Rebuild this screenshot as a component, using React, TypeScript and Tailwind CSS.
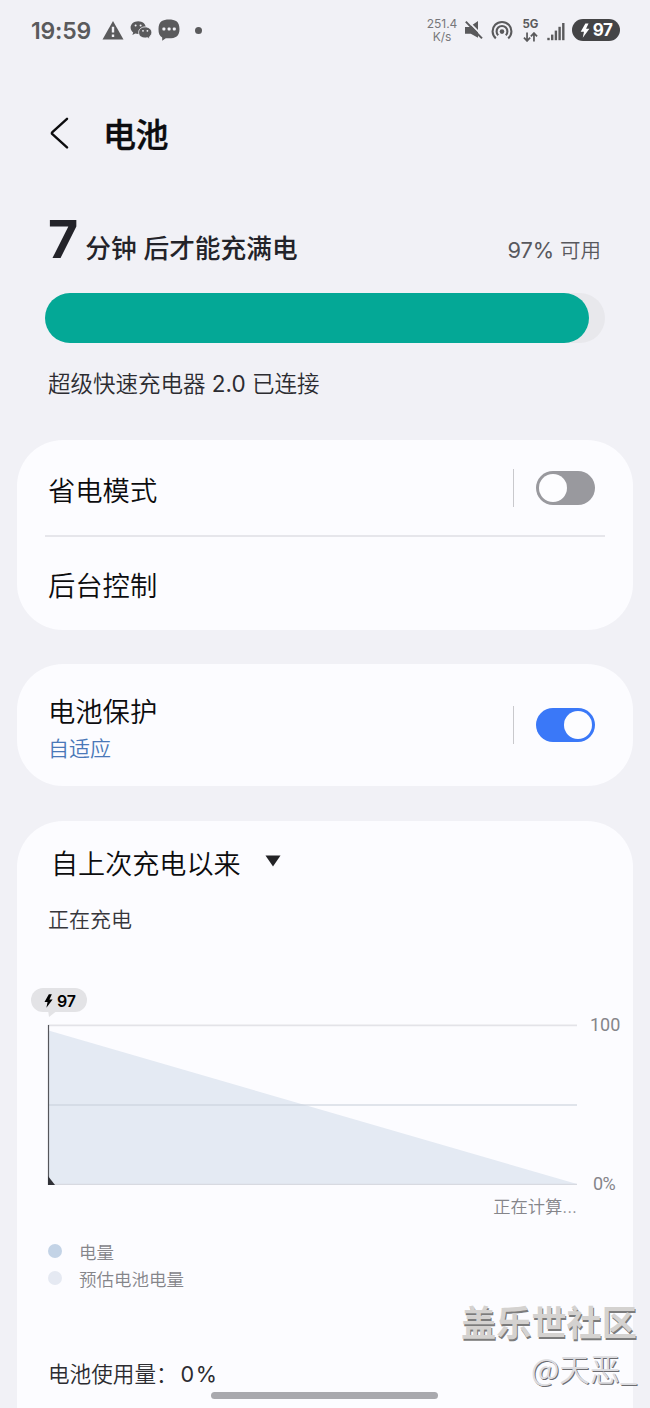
import React, { useState } from "react";

interface SwitchProps {
  checked: boolean;
  onChange: () => void;
}

const BoltIcon: React.FC<{ className?: string }> = ({ className }) => (
  <svg viewBox="0 0 10 16" className={className} fill="currentColor">
    <path d="M5.4 0.4 L0.4 9.2 H3.9 L2.6 15.6 L9.7 6.2 H6.1 L8.8 0.4 Z" />
  </svg>
);

const Switch: React.FC<SwitchProps> = ({ checked, onChange }) => (
  <div className="flex items-center">
    <div className="h-[38px] w-px bg-[#c9c9cd]" />
    <button
      onClick={onChange}
      className={`ml-[22px] flex h-[34px] w-[59px] items-center rounded-full px-[3px] ${
        checked ? "justify-end bg-[#3a78f8]" : "justify-start bg-[#99999e]"
      }`}
    >
      <span className="h-7 w-7 rounded-full bg-[#fdfdff]" />
    </button>
  </div>
);

const StatusBar: React.FC = () => (
  <div className="flex h-[60px] items-center justify-between pr-[30px] pl-[31px] text-[#5a5a5c]">
    <div className="flex items-center">
      <span className="w-[61px] pt-px text-[23px] leading-6 font-semibold tracking-[-0.2px]">19:59</span>
      <svg viewBox="0 0 22 20" className="ml-[10px] h-5 w-[22px]">
        <path d="M11 1 L21.5 19.5 H0.5 Z" fill="currentColor" />
        <path d="M11 6.8 V12.6 M11 14.6 V17" stroke="#f1f1f6" strokeWidth="2.4" />
      </svg>
      <svg viewBox="0 0 22 20" className="ml-[6px] h-5 w-[22px]">
        <path
          d="M8.2 1.2 C3.8 1.2 0.6 4 0.6 7.6 C0.6 9.6 1.6 11.3 3.2 12.5 L2.4 15 L5.3 13.5 C6.2 13.8 7.2 13.9 8.2 13.9 C12.6 13.9 15.8 11.2 15.8 7.6 C15.8 4 12.6 1.2 8.2 1.2 Z"
          fill="currentColor"
        />
        <path
          d="M15.2 6.9 C11.4 6.9 8.6 9.3 8.6 12.5 C8.6 15.7 11.4 18 15.2 18 C16 18 16.8 17.9 17.5 17.7 L20 19 L19.4 16.9 C20.9 15.8 21.8 14.3 21.8 12.5 C21.8 9.3 19 6.9 15.2 6.9 Z"
          fill="currentColor"
          stroke="#f1f1f6"
          strokeWidth="0.9"
        />
        <g fill="#f1f1f6">
          <circle cx="5.6" cy="5.6" r="1" />
          <circle cx="10.6" cy="5.6" r="1" />
          <circle cx="13" cy="10.8" r="0.9" />
          <circle cx="17.4" cy="10.8" r="0.9" />
        </g>
      </svg>
      <svg viewBox="0 0 22 22" className="ml-[6px] h-[22px] w-[22px]">
        <path
          d="M11 0.4 C17 0.4 21.5 2 21.5 10 C21.5 17.5 17.5 19.3 11 19.3 H7.8 L4.2 21.8 V18.4 C1.3 17 0.5 14.2 0.5 10 C0.5 2 5 0.4 11 0.4 Z"
          fill="currentColor"
        />
        <g fill="#f1f1f6">
          <rect x="4.4" y="8.6" width="3" height="3" rx="1" />
          <rect x="9.6" y="8.6" width="3" height="3" rx="1" />
          <rect x="14.8" y="8.6" width="3" height="3" rx="1" />
        </g>
      </svg>
      <span className="ml-[15px] h-[7px] w-[7px] rounded-full bg-current" />
    </div>

    <div className="flex items-center">
      <div className="w-8 text-center text-[12px] leading-[13px] font-normal text-[#77777a]">
        <div>251.4</div>
        <div>K/s</div>
      </div>
      <svg viewBox="0 0 20 20" className="ml-[6px] h-5 w-5">
        <path d="M1 7 H5.4 L14 1 V17.8 L6.8 13.8 H1 Z" fill="currentColor" />
        <path d="M3.4 0.6 L20 17.2" stroke="#f1f1f6" strokeWidth="1.8" />
        <path d="M1.8 1.6 L18 18.4" stroke="currentColor" strokeWidth="2" />
      </svg>
      <svg viewBox="0 0 22 20" className="ml-[7px] h-5 w-[22px]" fill="none" stroke="currentColor" strokeWidth="2.1">
        <path d="M4.8 18.4 A9.4 9.4 0 1 1 17.2 18.4" />
        <path d="M7.2 15.2 A5.4 5.4 0 1 1 14.8 15.2" />
        <circle cx="11" cy="11.6" r="2.3" fill="currentColor" stroke="none" />
      </svg>
      <div className="ml-[9px] flex w-[17px] flex-col items-center">
        <span className="text-[11.5px] leading-[12px] font-bold">5G</span>
        <svg viewBox="0 0 16 11" className="mt-[2px] h-[10px] w-[15px]" fill="none" stroke="currentColor" strokeWidth="1.9">
          <path d="M4.2 0.5 V9.4 M0.8 6.2 L4.2 9.8 L7.6 6.2" />
          <path d="M11.8 10.5 V1.6 M8.4 4.8 L11.8 1.2 L15.2 4.8" />
        </svg>
      </div>
      <svg viewBox="0 0 18 18" className="mt-[3px] ml-2 h-[18px] w-[18px]" fill="currentColor">
        <rect x="0.3" y="14.8" width="2.4" height="2.4" />
        <rect x="4" y="11.6" width="2.4" height="5.6" />
        <rect x="7.7" y="7.6" width="2.4" height="9.6" />
        <rect x="11.4" y="3.8" width="2.4" height="13.4" />
        <rect x="15.1" y="0" width="2.4" height="17.2" />
      </svg>
      <div className="ml-[7px] flex h-[22px] w-12 items-center justify-center rounded-full bg-[#444446] text-white">
        <BoltIcon className="h-[15px] w-[10px]" />
        <span className="ml-[3px] text-[17px] leading-5 font-bold tracking-[-0.6px]">97</span>
      </div>
    </div>
  </div>
);

const BatteryChart: React.FC = () => (
  <div className="relative mt-[53px] h-[197px] font-normal">
    <svg viewBox="0 0 616 197" className="h-[197px] w-[616px]">
      {/* level bubble */}
      <rect x="14" y="0" width="56" height="24" rx="12" fill="#e3e3e6" />
      <path d="M31 22 H41 L32 29 Z" fill="#e3e3e6" />
      <path d="M31.5 42.5 L560 196 H31.5 Z" fill="#e4eaf3" />
      <path d="M31 37.3 H560" stroke="#e3e3e8" strokeWidth="1.8" />
      <path d="M31 117 H560" stroke="#c9d0da" strokeOpacity="0.55" strokeWidth="1.8" />
      <path d="M31 196.5 H560" stroke="#d8dae1" strokeWidth="1.4" />
      <path d="M31.5 37 V197" stroke="#55565b" strokeWidth="1.2" />
      <path d="M31 188 L38 197 H31 Z" fill="#303137" />
    </svg>
    <div className="absolute top-[1px] left-[14px] flex h-6 w-14 items-center justify-center pl-[2px] text-black">
      <BoltIcon className="h-[14px] w-[9px]" />
      <span className="ml-1 text-[16px] leading-6 font-semibold">97</span>
    </div>
    <span className="absolute top-[26px] left-[573px] font-['Roboto'] text-[18px] leading-[22px] text-[#85858a]">100</span>
    <span className="absolute top-[185px] left-[576px] font-['Roboto'] text-[18px] leading-[22px] tracking-[-0.5px] text-[#85858a]">0%</span>
  </div>
);

const App: React.FC = () => {
  const [powerSaving, setPowerSaving] = useState(false);
  const [protection, setProtection] = useState(true);

  return (
    <div className="relative h-[1408px] w-[650px] overflow-hidden bg-[#f1f1f6] font-['Inter','Noto_Sans_CJK_SC',sans-serif] font-[350] text-[#0c0c0e]">
      <StatusBar />

      {/* Header */}
      <header className="flex h-[146px] items-center pl-[50px]">
        <svg viewBox="0 0 20 32" className="h-8 w-5" fill="none" stroke="#0c0c0e" strokeWidth="2.4" strokeLinecap="round" strokeLinejoin="round">
          <path d="M17 1.8 L2.4 15.2 Q1.4 16.2 2.4 17.2 L17 30.4" />
        </svg>
        <h1 className="mt-1 ml-[33px] text-[33px] leading-10 font-medium tracking-[-0.5px] [-webkit-text-stroke:0.4px_#0c0c0e]">电池</h1>
      </header>

      {/* Charge summary */}
      <section className="px-[45px] pt-[6px]">
        <div className="flex h-[56px] items-baseline justify-between pr-1 pl-[3px]">
          <div className="flex items-baseline text-[#232329]">
            <span className="text-[52px] leading-[56px] font-bold">7</span>
            <span className="ml-[7px] text-[25.7px] font-medium">分钟 后才能充满电</span>
          </div>
          <div className="text-[20.5px] text-[#58585d]">
            <span className="text-[21.8px] font-normal">97%</span> 可用
          </div>
        </div>
        <div className="mt-[25px] h-[50px] rounded-full bg-[#e8e8ec]">
          <div className="h-[50px] rounded-full bg-[#04a896]" style={{ width: "97.2%" }} />
        </div>
        <p className="mt-[26px] pl-[3px] text-[22.5px] leading-[30px] text-[#2c2c31]">
          超级快速充电器 <span className="font-normal">2.0</span> 已连接
        </p>
      </section>

      {/* Power saving */}
      <section className="mx-[17px] mt-[41px] h-[190px] rounded-[46px] bg-[#fcfcff] px-7">
        <div className="flex h-[95px] items-center justify-between pr-[10px] pl-[3px]">
          <span className="pt-[9px] text-[27.3px] leading-9">省电模式</span>
          <Switch checked={powerSaving} onChange={() => setPowerSaving(!powerSaving)} />
        </div>
        <div className="h-[2px] bg-[#e6e6eb]" />
        <div className="flex h-[93px] items-center pl-[3px]">
          <span className="pt-[6px] text-[27.3px] leading-9">后台控制</span>
        </div>
      </section>

      {/* Battery protection */}
      <section className="mx-[17px] mt-[34px] flex h-[122px] items-center justify-between rounded-[46px] bg-[#fcfcff] pr-[38px] pl-[31px]">
        <div className="flex flex-col pt-[9px]">
          <span className="text-[27.3px] leading-[38px]">电池保护</span>
          <span className="text-[21px] leading-[34px] text-[#4a78b8]">自适应</span>
        </div>
        <Switch checked={protection} onChange={() => setProtection(!protection)} />
      </section>

      {/* Usage since last charge */}
      <section className="mx-[17px] mt-[35px] h-[640px] rounded-t-[46px] bg-[#fcfcff] pt-[26px]">
        <div className="flex h-9 items-center pl-[34px]">
          <span className="text-[27.1px] leading-9">自上次充电以来</span>
          <svg viewBox="0 0 16 12" className="mb-2 ml-6 h-3 w-4">
            <path d="M0.5 0.5 H15.5 L8 11.5 Z" fill="#232326" />
          </svg>
        </div>
        <p className="mt-[22px] pl-[31px] text-[21px] leading-[30px] text-[#36363b]">正在充电</p>

        <BatteryChart />

        <div className="mt-[10px] pr-14 text-right text-[17.3px] leading-6 text-[#85858a]">正在计算...</div>

        <div className="mt-[20px] pl-[31px] text-[17.5px] leading-[27px] text-[#85858a]">
          <div className="flex items-center">
            <span className="mb-[3px] h-[14px] w-[14px] rounded-full bg-[#c3d3e6]" />
            <span className="ml-[17px]">电量</span>
          </div>
          <div className="flex items-center">
            <span className="mb-[3px] h-[14px] w-[14px] rounded-full bg-[#e5e9f2]" />
            <span className="ml-[17px]">预估电池电量</span>
          </div>
        </div>

        <div className="mt-[66px] flex items-center pl-[31px] text-[21.6px] leading-[30px] text-[#2c2c31]">
          <span>电池使用量：</span>
          <span className="ml-[3px] font-normal tracking-[1.5px]">0%</span>
        </div>
      </section>

      {/* Community signature */}
      <div className="absolute top-[1299px] right-[13px] text-right font-['Noto_Sans_CJK_SC',sans-serif]">
        <div className="text-[35.2px] leading-[44px] font-bold text-[#d4d2d0] [text-shadow:1px_2px_0_#7c7c7c]">盖乐世社区</div>
        <div className="text-[30.4px] leading-[50px] font-[350] text-[#dcdce0] [text-shadow:1px_1px_0_#6c6c70]">@天恶_</div>
      </div>

      {/* Gesture bar */}
      <div className="absolute top-[1392px] left-[211px] h-[7px] w-[227px] rounded-full bg-[#a9a9ae]" />
    </div>
  );
};

export default App;
